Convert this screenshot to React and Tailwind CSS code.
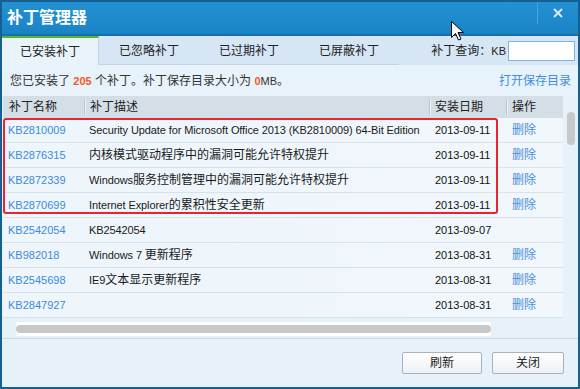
import React from 'react';

const CJK = /[\u3000-\u303f\u4e00-\u9fff\uff00-\uffef]/;

// Latin text renders a touch smaller than the CJK glyphs in the original
const Mixed = ({ t }) =>
  t
    .split(/([\u3000-\u303f\u4e00-\u9fff\uff00-\uffef]+)/)
    .map((s, i) =>
      s ? (
        <span key={i} className={CJK.test(s) ? 'text-[12px]' : 'text-[11px] tracking-[-0.1px]'}>
          {s}
        </span>
      ) : null
    );

const rows = [
  ['KB2810009', 'Security Update for Microsoft Office 2013 (KB2810009) 64-Bit Edition', '2013-09-11', true],
  ['KB2876315', '内核模式驱动程序中的漏洞可能允许特权提升', '2013-09-11', true],
  ['KB2872339', 'Windows服务控制管理中的漏洞可能允许特权提升', '2013-09-11', true],
  ['KB2870699', 'Internet Explorer的累积性安全更新', '2013-09-11', true],
  ['KB2542054', 'KB2542054', '2013-09-07', false],
  ['KB982018', 'Windows 7 更新程序', '2013-08-31', true],
  ['KB2545698', 'IE9文本显示更新程序', '2013-08-31', true],
  ['KB2847927', '', '2013-08-31', true],
];

const tabs = ['已安装补丁', '已忽略补丁', '已过期补丁', '已屏蔽补丁'];

const HeadCell = ({ children, sep }) => (
  <div className="relative flex items-center pl-[6px] text-[12px] text-[#222]">
    {sep && <span className="absolute left-0 top-[3px] h-[16px] w-[1px] bg-[#b9c6d2] shadow-[1px_0_0_#eef3f7]" />}
    {children}
  </div>
);

export default function App() {
  return (
    <div className="relative flex h-[389px] w-[580px] flex-col border-2 border-[#155f91] bg-[#e7f1f9] font-['Liberation_Sans','Noto_Sans_CJK_SC',sans-serif] text-[#222]">
      {/* title bar */}
      <div className="flex h-[34px] items-center border-b-2 border-[#1570ad] bg-gradient-to-b from-[#2391d3] to-[#1a83c5] pl-[5px]">
        <span className="text-[16px] font-bold text-white">补丁管理器</span>
        <div className="ml-auto flex h-full items-start">
          <span className="h-[22px] w-[1px] bg-[#4ba3d9]" />
          <div className="flex w-[40px] justify-center pt-[6px]">
            <svg width="10" height="10" viewBox="0 0 10 10">
              <path d="M1 1L9 9M9 1L1 9" stroke="#d6e8f5" strokeWidth="2" />
            </svg>
          </div>
        </div>
      </div>

      {/* tabs */}
      <div className="flex h-[29px] bg-[#d6e6f4]">
        {tabs.map((t, i) =>
          i === 0 ? (
            <div key={t} className="flex w-[97px] items-center justify-center border-t-2 border-r border-[#55b82c] border-r-[#c4d6e6] bg-[#e9f3fa] text-[12px] text-[#222]">
              {t}
            </div>
          ) : (
            <div key={t} className="flex w-[100px] items-center justify-center border-b border-[#c3d4e4] pt-[1px] text-[12px] text-[#222]">
              {t}
            </div>
          )
        )}
        <div className="ml-auto flex items-center gap-[2px] pr-[3px]">
          <span className="text-[12px]">补丁查询：<span className="text-[11px]">KB</span></span>
          <input className="h-[20px] w-[67px] border border-[#7eb3dd] bg-white outline-none" />
        </div>
      </div>

      {/* info line */}
      <div className="flex h-[31px] items-center justify-between bg-[#e8f2fa] pl-[8px] pr-[7px] pt-[1px]">
        <span className="text-[12px] text-[#333]">
          您已安装了 <span className="text-[11px] font-bold text-[#f05a24]">205</span> 个补丁。补丁保存目录大小为{' '}
          <span className="text-[11px] font-bold text-[#f05a24]">0</span>
          <span className="text-[11px]">MB</span>。
        </span>
        <span className="text-[12px] text-[#3d8fe0]">打开保存目录</span>
      </div>

      {/* table */}
      <div className="flex">
        <div className="relative w-[561px] pl-[1px]">
          <div className="grid h-[22px] grid-cols-[81px_345px_77px_57px] bg-[#d4dee7]">
            <HeadCell>补丁名称</HeadCell>
            <HeadCell sep>补丁描述</HeadCell>
            <HeadCell sep>安装日期</HeadCell>
            <HeadCell sep>操作</HeadCell>
          </div>
          {rows.map(([kb, desc, date, del]) => (
            <div key={kb} className="grid h-[25px] grid-cols-[81px_345px_77px_57px] border-b border-[#d8e2ea] bg-gradient-to-r from-[#eef5fb] to-[#f1f7fb]">
              <div className="flex items-center pl-[5px] text-[11px] text-[#3b8be0]">{kb}</div>
              <div className="flex items-center whitespace-pre pl-[5px] text-[#1a1a1a]">
                <Mixed t={desc} />
              </div>
              <div className="flex items-center pl-[6px] text-[11px] text-[#111]">{date}</div>
              <div className="flex items-center pl-[6px] text-[12px] text-[#4a8fe0]">{del ? '删除' : ''}</div>
            </div>
          ))}
          {/* horizontal scrollbar */}
          <div className="flex h-[20px] items-center pl-[13px] pt-[1px]">
            <div className="flex h-[14px] w-[475px] items-center bg-white">
              <div className="h-[8px] w-full rounded-full bg-[#c8c8c8]" />
            </div>
          </div>
          {/* highlight box */}
          <div className="absolute left-[1px] top-[22px] h-[96px] w-[495px] rounded-[3px] border-2 border-[#e52530]" />
        </div>
        <div className="flex w-[15px] justify-center pt-[16px]">
          <div className="h-[33px] w-[8px] rounded-full bg-[#c8c8c8]" />
        </div>
      </div>

      {/* footer */}
      <div className="flex flex-1 items-start justify-end gap-[10px] border-t border-[#cfd9e2] bg-[#e6f1f9] pr-[14px] pt-[13px]">
        <button className="h-[22px] w-[80px] rounded-[2px] border border-[#a7b2bc] bg-gradient-to-b from-white to-[#eef1f4] text-[12px] text-[#222]">
          刷新
        </button>
        <button className="h-[22px] w-[72px] rounded-[2px] border border-[#a7b2bc] bg-gradient-to-b from-white to-[#eef1f4] text-[12px] text-[#222]">
          关闭
        </button>
      </div>

      {/* mouse pointer */}
      <svg className="absolute left-[449px] top-[19px]" width="13" height="20" viewBox="0 0 13 20">
        <path d="M0.5 0.5V16.5L4.5 12.5L7.5 19L10 18L7 11.5H12.5Z" fill="white" stroke="black" strokeWidth="1" strokeLinejoin="round" />
      </svg>
    </div>
  );
}
